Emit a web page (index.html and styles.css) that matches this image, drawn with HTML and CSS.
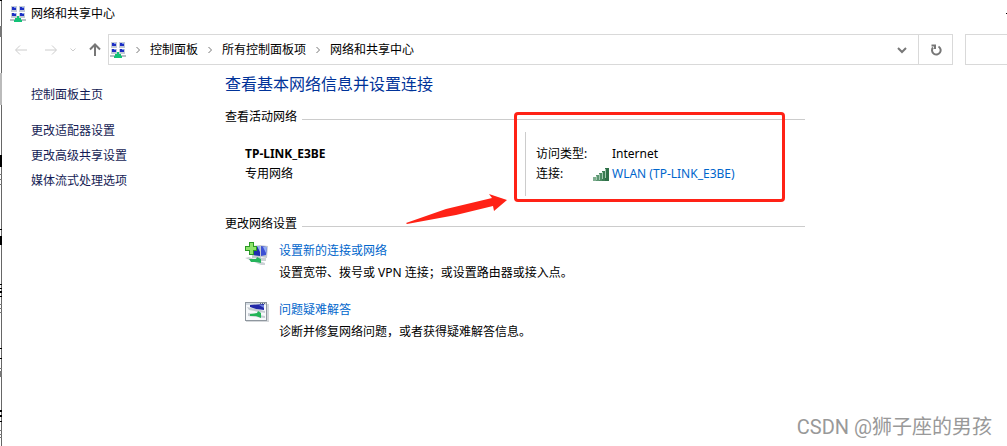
FILE: index.html
```html
<!DOCTYPE html>
<html lang="zh-CN">
<head>
    <meta charset="UTF-8">
    <title>网络和共享中心</title>
    <link rel="stylesheet" href="styles.css">
</head>
<body>

<!-- 图标定义 -->
<svg class="defs" aria-hidden="true">
    <symbol id="icon-center" viewBox="0 0 16 16">
        <path fill="#c3cbd6" d="M1 0h6v6H1zM9 0h6v6H9zM1 7h6v5H1zM9 7h6v5H9z"/>
        <path fill="#1d2fc4" d="M2 1h4v3H2zM10 1h4v3h-4zM2 7h4v3H2zM10 7h4v3h-4z"/>
        <path fill="#7f9cf0" d="M4 1h2v1H4zM12 1h2v1h-2zM4 7h2v1H4zM12 7h2v1h-2z"/>
        <path fill="#b4bfc4" d="M0 13h16v2H0z"/>
        <path fill="#13c277" d="M7 10h2v2h2v2h1v2H4v-2h1v-2h2z"/>
    </symbol>
</svg>

<div class="window">
    <!-- 被窗口遮住的页面边缘 -->
    <svg class="behind" viewBox="0 0 2 446" aria-hidden="true">
        <path fill="#000" d="M0 0h2v1H0zM0 155h2v12H0zM0 229h2v1H0zM0 236h2v9H0zM0 284h2v1H0zM0 288h2v1H0zM0 291h2v2H0zM0 296h2v1H0zM0 348h2v1H0zM0 358h2v1H0zM0 410h2v2H0zM0 415h2v2H0zM0 421h2v1H0z"/>
        <path fill="#777" d="M0 26h2v11H0zM0 174h2v1H0zM0 179h2v1H0zM0 184h2v1H0zM0 304h2v1H0zM0 308h2v1H0zM0 312h2v1H0zM0 368h2v1H0zM0 371h2v6H0zM0 430h2v1H0zM0 434h2v1H0zM0 437h2v1H0z"/>
        <path fill="#bbb" d="M0 73h2v32H0z"/>
    </svg>

    <header class="title-bar">
        <svg class="icon-16"><use href="#icon-center"/></svg>
        <span class="title">网络和共享中心</span>
        <button class="minimize" aria-label="最小化"></button>
    </header>

    <nav class="nav-bar">
        <div class="nav-buttons">
            <button class="disabled" aria-label="后退">
                <svg width="14" height="14" viewBox="0 0 14 14"><path d="M13 7H2M6 2.500L1.500 7L6 11.500"/></svg>
            </button>
            <button class="disabled" aria-label="前进">
                <svg width="14" height="14" viewBox="0 0 14 14"><path d="M1 7h11M8 2.500L12.500 7L8 11.500"/></svg>
            </button>
            <button class="disabled recent" aria-label="最近浏览的位置">
                <svg width="8" height="8" viewBox="0 0 8 8"><path d="M1.500 2.500L4 5L6.500 2.500"/></svg>
            </button>
            <button class="up" aria-label="上移">
                <svg width="14" height="14" viewBox="0 0 14 14"><path d="M7 13V2M2 6.500L7 1.500L12 6.500"/></svg>
            </button>
        </div>
        <div class="address">
            <svg class="icon-16"><use href="#icon-center"/></svg>
            <svg class="sep" viewBox="0 0 8 8"><path d="M2.500 1L5.500 4L2.500 7"/></svg>
            <a href="#">控制面板</a>
            <svg class="sep" viewBox="0 0 8 8"><path d="M2.500 1L5.500 4L2.500 7"/></svg>
            <a href="#">所有控制面板项</a>
            <svg class="sep" viewBox="0 0 8 8"><path d="M2.500 1L5.500 4L2.500 7"/></svg>
            <a href="#">网络和共享中心</a>
            <button class="history" aria-label="以前的位置">
                <svg width="10" height="8" viewBox="0 0 10 8"><path d="M1 2L5 6L9 2"/></svg>
            </button>
            <button class="refresh" aria-label="刷新">
                <svg width="12" height="12" viewBox="0 0 12 12"><path d="M8.500 2.500A4.300 4.300 0 1 1 3 3.500M1.500 1.500H5V5"/></svg>
            </button>
        </div>
        <input class="search" type="text" aria-label="搜索控制面板">
    </nav>

    <div class="content">
        <aside class="sidebar">
            <a class="home" href="#">控制面板主页</a>
            <a href="#">更改适配器设置</a>
            <a href="#">更改高级共享设置</a>
            <a href="#">媒体流式处理选项</a>
        </aside>

        <main class="main">
            <h1>查看基本网络信息并设置连接</h1>

            <section>
                <h2>查看活动网络</h2>
                <div class="network">
                    <div class="network-name">
                        <strong>TP-LINK_E3BE</strong>
                        <span>专用网络</span>
                    </div>
                    <dl class="network-info">
                        <dt>访问类型:</dt>
                        <dd>Internet</dd>
                        <dt>连接:</dt>
                        <dd>
                            <svg class="signal" viewBox="0 0 16 13" aria-hidden="true">
                                <path fill="#7fae90" d="M0 9h3v4H0z"/>
                                <path fill="#5c9672" d="M3 7h3v6H3z"/>
                                <path fill="#4c8a63" d="M6 5h3v8H6z"/>
                                <path fill="#3b7d53" d="M9 3h3v10H9z"/>
                                <path fill="#2f7048" d="M12 0h4v13h-4z"/>
                                <path fill="#a3c9b1" d="M3 8h1v4H3zM6 6h1v6H6zM9 4h1v7H9zM12 1h1v9h-1z"/>
                            </svg>
                            <a href="#">WLAN (TP-LINK_E3BE)</a>
                        </dd>
                    </dl>
                    <div class="mark-box"></div>
                    <svg class="mark-arrow" viewBox="0 0 102 32" aria-hidden="true">
                        <path fill="#ff2216" d="M0 30L40 16L86 5L83 1L101 7L88 18L87 13L50 22L1 31Z"/>
                    </svg>
                </div>
            </section>

            <section>
                <h2>更改网络设置</h2>
                <div class="task">
                    <svg viewBox="0 0 24 24" aria-hidden="true">
                        <path fill="#c4cad1" d="M7 4l9-1v14l-9-1zM15 3l8 1-1 12-7-1z"/>
                        <path fill="#202cb0" d="M8 5l7-1v10l-7-1z"/>
                        <path fill="#3c50d4" d="M16 4l6 1-1 8-5 1z"/>
                        <path fill="#93adf2" d="M18 5l4 0-1 6zM12 4l3 0v6z"/>
                        <path fill="#ccd2d6" d="M0 16l4-1 16 6v2l-4 0zM12 16h9v3h-7z"/>
                        <path fill="#26b45c" d="M4 17l7 0 1-2 4 2 0 4-5-1-5 0z"/>
                        <path fill="#2b9a26" d="M4 0h5v4h3v5H9v4H4V9H0V4h4z"/>
                        <path fill="#8ee36b" d="M5 1h3v4h3v3H8v4H5V8H1V5h4z"/>
                    </svg>
                    <div>
                        <a href="#">设置新的连接或网络</a>
                        <p>设置宽带、拨号或 VPN 连接；或设置路由器或接入点。</p>
                    </div>
                </div>
                <div class="task">
                    <svg viewBox="0 0 24 24" aria-hidden="true">
                        <path fill="#d5d8db" d="M1 3h23v18H1z"/>
                        <path fill="#8f979f" d="M0 1h22v19H0z"/>
                        <path fill="#f7f9fb" d="M1 4h20v15H1z"/>
                        <path fill="#d4dbe3" d="M1 2h20v2H1z"/>
                        <path fill="#5e6b78" d="M15 2h1v1h-1zM17 2h1v1h-1zM19 2h1v1h-1z"/>
                        <path fill="#c6ccd2" d="M2 6l18 4v2L4 9zM3 12l17 3v2L3 15z"/>
                        <path fill="#2228a8" d="M5 4l14-1v6l-8-1-6-2z"/>
                        <path fill="#6e83dc" d="M14 4h5v3z"/>
                        <path fill="#21b457" d="M5 13l7-1 1-2 3 2 0 5-5-2-6 0z"/>
                    </svg>
                    <div>
                        <a href="#">问题疑难解答</a>
                        <p>诊断并修复网络问题，或者获得疑难解答信息。</p>
                    </div>
                </div>
            </section>
        </main>
    </div>

    <div class="watermark">CSDN @狮子座的男孩</div>
</div>

</body>
</html>
```
FILE: styles.css
```css
* {
    box-sizing: border-box;
}

body {
    margin: 0;
    background: #fff;
    color: #000;
    font: 12px/20px "Noto Sans", "Noto Sans CJK SC", sans-serif;
}

a {
    color: #0066cc;
    text-decoration: none;
}

button {
    display: flex;
    align-items: center;
    justify-content: center;
    padding: 0;
    border: 0;
    background: none;
}

svg {
    display: block;
    flex: none;
}

.defs {
    position: absolute;
    width: 0;
    height: 0;
}

.icon-16 {
    width: 16px;
    height: 16px;
}

.window {
    position: relative;
    min-height: 100vh;
    margin-left: 1px;
    border-left: 1px solid #666;
    overflow: hidden;
}

.behind {
    position: fixed;
    top: 0;
    left: 0;
    width: 2px;
    height: 446px;
}

/* 标题栏 */
.title-bar {
    display: flex;
    align-items: center;
    gap: 5px;
    height: 27px;
    padding-left: 8px;
}

.minimize {
    width: 1px;
    height: 1px;
    margin-left: auto;
    background: #000;
}

/* 导航栏 */
.nav-bar {
    display: flex;
    align-items: center;
    height: 45px;
}

.nav-buttons {
    display: flex;
    align-items: center;
    gap: 16px;
    width: 106px;
    padding-left: 12px;
}

.nav-buttons svg,
.address button svg,
.sep {
    fill: none;
    stroke: #777;
    stroke-width: 2;
}

.nav-buttons .disabled svg {
    stroke: #ccc;
    stroke-width: 1;
}

.nav-buttons .recent {
    margin: 0 -5px;
}

.address {
    display: flex;
    flex: 1;
    align-items: center;
    height: 31px;
    padding-left: 1px;
    border: 1px solid #d9d9d9;
}

.address a {
    color: #000;
}

.sep {
    width: 8px;
    height: 8px;
    margin: 0 8px;
}

.address .sep {
    stroke-width: 1;
}

.history {
    width: 32px;
    height: 100%;
    margin-left: auto;
}

.address .refresh {
    width: 34px;
    height: 100%;
    border-left: 1px solid #d9d9d9;
}

.search {
    width: 42px;
    height: 31px;
    margin-left: 12px;
    border: 1px solid #d9d9d9;
    border-right: 0;
    border-radius: 0;
}

/* 内容区 */
.content {
    display: flex;
}

.sidebar {
    display: flex;
    flex-direction: column;
    gap: 5px;
    width: 223px;
    padding: 13px 0 0 29px;
}

.sidebar a {
    color: #151c55;
}

.sidebar .home {
    margin-bottom: 11px;
}

.main {
    flex: 1;
    max-width: 580px;
}

h1 {
    margin: 0 0 11px;
    color: #003399;
    font-size: 16px;
    font-weight: normal;
    line-height: 24px;
}

h2 {
    display: flex;
    align-items: center;
    gap: 5px;
    margin: 0;
    font-size: 12px;
    font-weight: normal;
    line-height: 20px;
}

h2::after {
    content: "";
    flex: 1;
    height: 1px;
    margin-top: 4px;
    background: #ccc;
}

.network {
    position: relative;
    display: flex;
    height: 64px;
    margin: 5px 0 18px;
}

.network-name {
    display: flex;
    flex-direction: column;
    width: 300px;
    padding: 12px 0 0 20px;
}

.network-info {
    display: grid;
    grid-template-columns: 57px 1fr;
    align-content: start;
    flex: 1;
    margin: 0;
    padding: 12px 0 0 10px;
    border-left: 1px solid #ccc;
}

.network-info dd {
    display: flex;
    align-items: center;
    gap: 3px;
    margin: 0;
}

.network-info dd:first-of-type {
    padding-left: 19px;
}

.signal {
    width: 16px;
    height: 13px;
}

/* 红色标注 */
.mark-box {
    position: absolute;
    top: -20px;
    left: 289px;
    width: 271px;
    height: 90px;
    border: 3px solid #ff2216;
    border-radius: 4px;
}

.mark-arrow {
    position: absolute;
    top: 61px;
    left: 181px;
    width: 102px;
    height: 32px;
}

.task {
    display: flex;
    gap: 10px;
    margin: 7px 0 17px;
    padding-left: 20px;
}

.task svg {
    width: 24px;
    height: 24px;
    margin-top: 1px;
}

.task p {
    margin: 2px 0 0;
}

.watermark {
    position: absolute;
    right: 15px;
    bottom: 4px;
    color: #999;
    font: 20px/30px Roboto, "Noto Sans CJK SC", sans-serif;
}
```
